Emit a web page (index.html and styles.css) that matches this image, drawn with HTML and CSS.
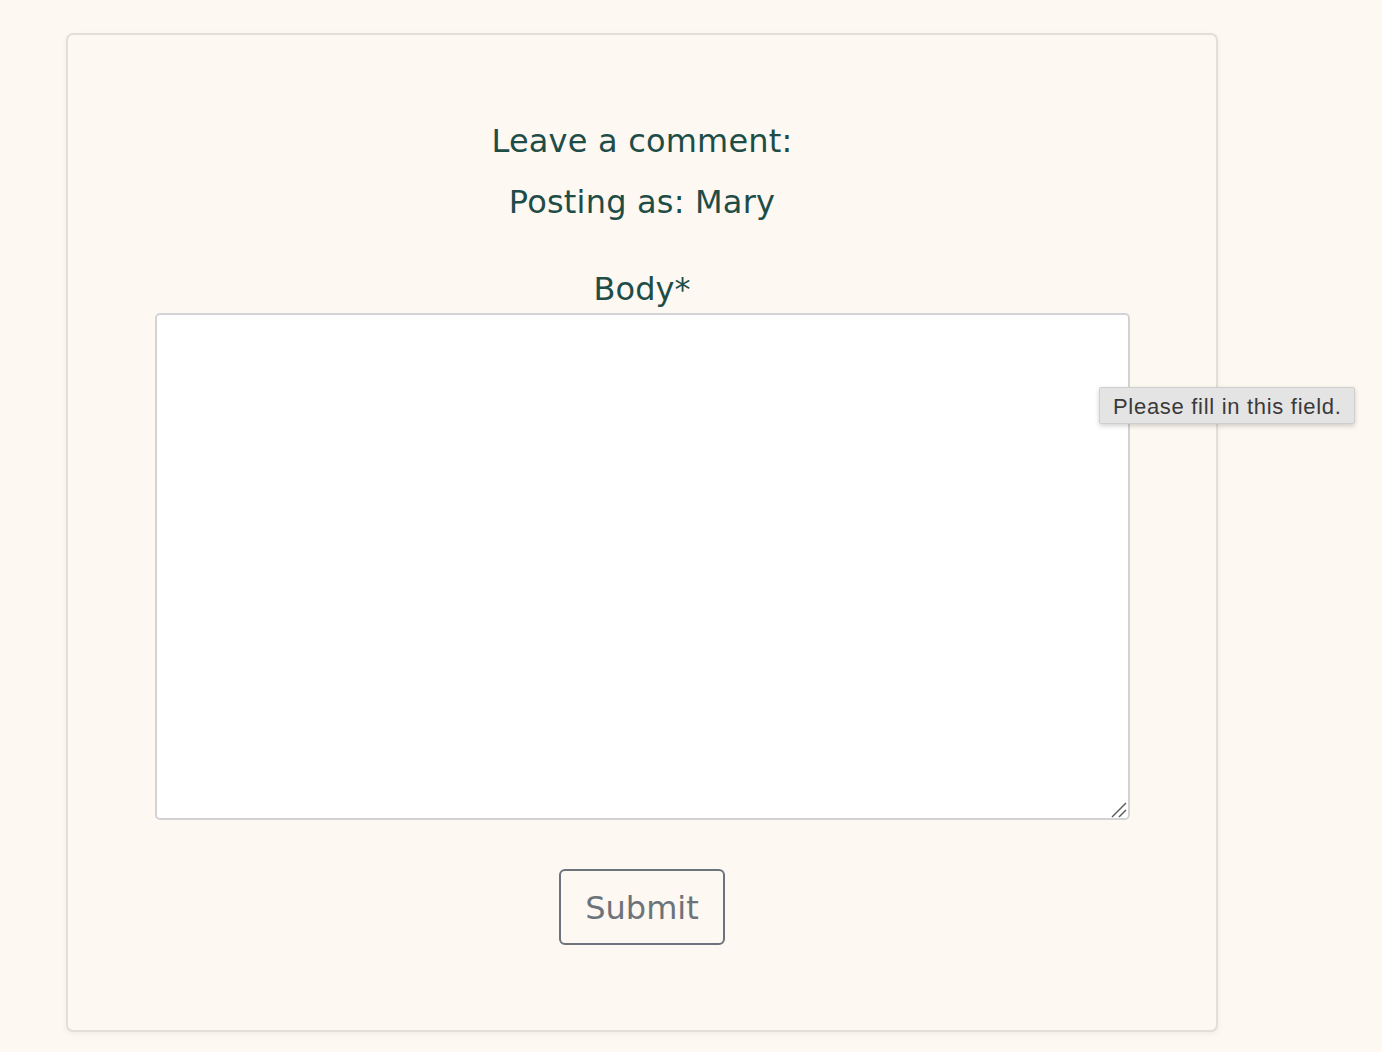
FILE: index.html
```html
<!DOCTYPE html>
<html lang="en">
<head>
<meta charset="utf-8">
<title>Leave a comment</title>
<link rel="stylesheet" href="styles.css">
</head>
<body>
<div class="page">
  <div class="card">
    <form class="comment-form">
      <p class="title">Leave a comment:</p>
      <p class="posting">Posting as: Mary</p>
      <label class="field-label" for="body">Body*</label>
      <div class="field-wrap">
        <textarea id="body" class="field" required></textarea>
        <svg class="grip" width="16" height="16" viewBox="0 0 16 16" aria-hidden="true">
          <line x1="1" y1="15" x2="15" y2="1" stroke="#5a5a5a" stroke-width="1.4"/>
          <line x1="8" y1="15" x2="15" y2="8" stroke="#5a5a5a" stroke-width="1.4"/>
        </svg>
      </div>
      <button type="button" class="btn-submit">Submit</button>
    </form>
  </div>
  <div class="tooltip">Please fill in this field.</div>
</div>
</body>
</html>
```
FILE: styles.css
```css
html, body {
  margin: 0;
  padding: 0;
  background: #fdf8f1;
}
body {
  font-family: "DejaVu Sans", Verdana, sans-serif;
  color: #1e4d48;
}
.page {
  position: relative;
  width: 1382px;
  height: 1052px;
  padding: 33px 0 0 66px;
  box-sizing: border-box;
}
.card {
  width: 1152px;
  height: 999px;
  box-sizing: border-box;
  border: 2px solid #e2ded8;
  border-radius: 7px;
  box-shadow: 0 2px 6px rgba(0,0,0,0.05);
  background: #fdf8f1;
}
.comment-form {
  display: flex;
  flex-direction: column;
  align-items: center;
  padding-top: 82px;
}
.title, .posting {
  margin: 0;
  font-size: 32px;
  line-height: 48px;
  letter-spacing: 0.2px;
}
.posting {
  margin-top: 13px;
}
.field-label {
  display: block;
  margin-top: 40px;
  font-size: 32px;
  line-height: 47px;
}
.field-wrap {
  position: relative;
  width: 975px;
  height: 507px;
}
.field {
  display: block;
  width: 100%;
  height: 100%;
  box-sizing: border-box;
  margin: 0;
  border: 2px solid #d3d3d6;
  border-radius: 5px;
  background: #fff;
  resize: none;
  font-family: "DejaVu Sans", sans-serif;
  font-size: 20px;
}
.grip {
  position: absolute;
  right: 3px;
  bottom: 2px;
}
.btn-submit {
  margin-top: 49px;
  width: 166px;
  height: 76px;
  box-sizing: border-box;
  border: 2px solid #6c737a;
  border-radius: 6px;
  background: transparent;
  color: #6c737a;
  font-family: "DejaVu Sans", sans-serif;
  font-size: 32px;
  padding: 2px 0 0;
}
.tooltip {
  position: absolute;
  left: 1099px;
  top: 387px;
  width: 256px;
  height: 37px;
  box-sizing: border-box;
  background: #e4e4e4;
  border: 1px solid #cfcfcf;
  border-radius: 2px;
  box-shadow: 0 2px 5px rgba(0,0,0,0.18);
  font-family: "Liberation Sans", Arial, sans-serif;
  font-size: 22px;
  letter-spacing: 0.7px;
  color: #3a3a3a;
  line-height: 37px;
  padding-left: 13px;
  white-space: nowrap;
}
```
